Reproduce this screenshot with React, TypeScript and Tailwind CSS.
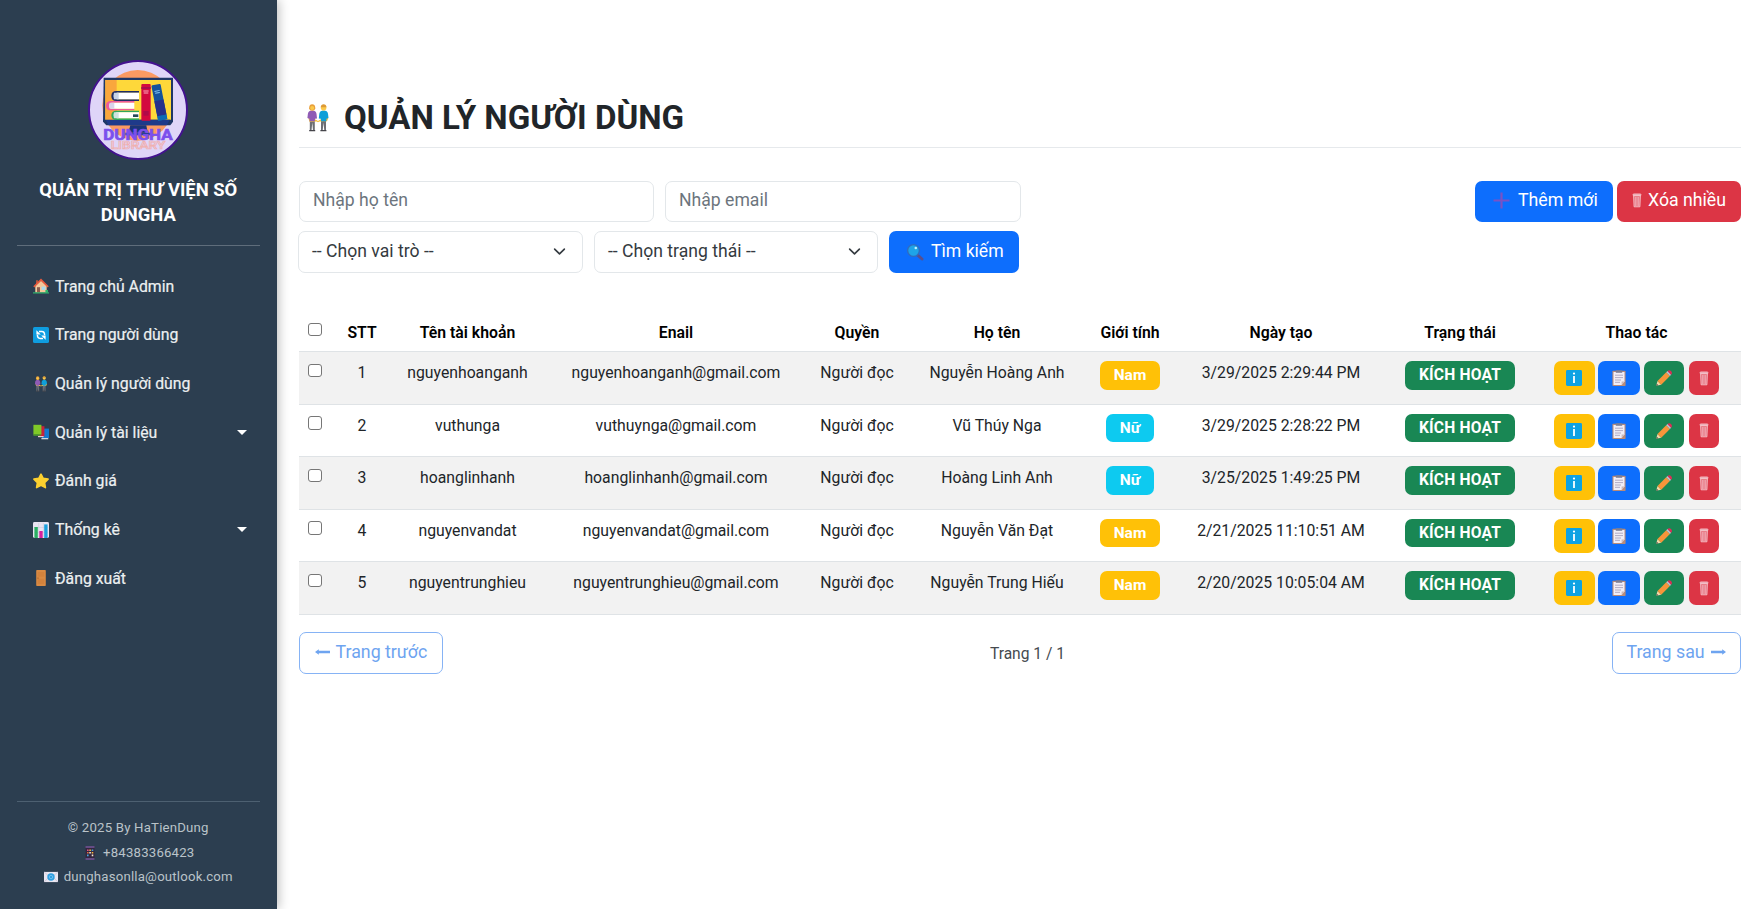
import type { ReactNode } from "react";
import clsx from "clsx";

type IconProps = { className?: string };

function Logo() {
  return (
    <svg viewBox="13 9 300 300" className="size-[100px] font-['Roboto',sans-serif]">
      <defs>
        <clipPath id="screen-disc">
          <circle cx="162" cy="145" r="106" />
        </clipPath>
      </defs>
      <circle cx="163" cy="159" r="147" fill="#dfd5f8" stroke="#43128f" strokeWidth="6" />
      <circle cx="162" cy="145" r="106" fill="#fb9a62" />
      <path d="M60 62h208v132l-8 11H68l-10-11z" fill="#1f3767" />
      <path d="M65 69h197v119H65z" fill="#fed83a" />
      <path d="M65 69h34v119H65z" fill="#f9a73d" />
      <path d="M60 188h208v6l-8 11H68l-10-11z" fill="#1f3a8a" clipPath="url(#screen-disc)" />
      <path d="M140 205h48l4 22h-58z" fill="#1b3478" />
      <path d="M125 227h76v8h-76z" fill="#2c3f94" />
      <path d="M166 102h-68q-15 0-15 15t15 15h68v-5h-64q-8 0-8-10t8-10h64z" fill="#1f2d63" />
      <path d="M166 107h-66q-7 0-7 10t7 10h66z" fill="#fff" />
      <path d="M91 107h14v20H91q-4-10 0-20z" fill="#c8d3e6" />
      <path d="M152 132H82q-15 0-15 14t15 14h70v-5H86q-9 0-9-9t9-9h66z" fill="#ec5a9b" />
      <path d="M152 137H84q-7 0-7 9t7 9h68z" fill="#fff" />
      <path d="M78 137h14v18H78q-4-9 0-18z" fill="#d9d3ea" />
      <path d="M166 161H98q-15 0-15 14t15 14h68v-5h-64q-8 0-8-9t8-9h64z" fill="#2fa85c" />
      <path d="M166 166h-66q-7 0-7 9t7 9h66z" fill="#fff" />
      <path d="M91 166h14v18H91q-4-9 0-18z" fill="#cfe3df" />
      <path d="M148 172h16v8h-16z" fill="#244a58" />
      <rect x="173" y="81" width="28" height="110" rx="3" fill="#d3093f" />
      <path d="M173 90h28v6h-28z" fill="#a90b4c" />
      <path d="M179 102h16M180 108h14" stroke="#ffb0bd" strokeWidth="3" />
      <path d="M179 162h16v14h-16z" fill="#b00a48" />
      <g transform="rotate(-11 227 136)">
        <rect x="213" y="82" width="28" height="108" rx="3" fill="#14529c" />
        <path d="M213 130h28v46h-28z" fill="#26308b" />
        <path d="M213 176h28v14h-28z" fill="#0c6bb4" />
        <path d="M219 101h16M220 107h14" stroke="#85c9f5" strokeWidth="3" />
      </g>
      <text textAnchor="middle">
        <tspan x="163" y="250" textLength="208" lengthAdjust="spacingAndGlyphs" fontWeight="700" fontSize="45" fill="#7c50ec" stroke="#7c50ec" strokeWidth="2">DUNGHA</tspan>
        <tspan x="163" y="276" textLength="164" lengthAdjust="spacingAndGlyphs" fontWeight="500" fontSize="32" fill="#e3cdf0" stroke="#f0b0ae" strokeWidth="2">LIBRARY</tspan>
      </text>
    </svg>
  );
}

function HouseIcon({ className }: IconProps) {
  return (
    <svg viewBox="0 0 16 16" className={className}>
      <path d="M3 2.2h2v4H3z" fill="#b5543c" />
      <path d="M2.3 8 8 2.6 13.7 8v6.4H2.3z" fill="#f5c89b" />
      <path d="M8 .6.3 8.2l1 1.2L8 3.1l6.7 6.3 1-1.2z" fill="#ea5a3d" />
      <path d="M4 9.2h3v5.2H4z" fill="#8d5a4a" />
      <path d="M8.6 8.6h3.6v3.3H8.6z" fill="#a5dcf2" />
      <path d="M0 14.3h16v1.2H0z" fill="#2fb56d" />
      <path d="M12.4 12h2.6v2.6h-2.6z" fill="#2fb56d" />
    </svg>
  );
}

function SyncIcon({ className }: IconProps) {
  return (
    <svg viewBox="0 0 16 16" className={className}>
      <rect width="16" height="16" rx="1.6" fill="#0f9de0" />
      <path d="M6 4.600h2.800q2.800 0 2.800 3.600M10 11.400H7.200q-2.800 0-2.800-3.600" fill="none" stroke="#fff" strokeWidth="1.500" />
      <path d="M3.400 3.200v4.400h4.400zM12.600 12.800V8.400H8.200z" fill="#fff" />
    </svg>
  );
}

function CoupleIcon({ className }: IconProps) {
  return (
    <svg viewBox="0 0 22 28" className={className}>
      <path d="M2.800 16h5v10.600H6l-.7-8-.8 8H2.800zM14 16h5v10.600h-1.700l-.8-8-.8 8H14z" fill="#6d6e73" />
      <path d="M2.200 26h6v1.300h-6zM13.400 26h6v1.300h-6z" fill="#45444a" />
      <path d="M1 12.500 9 15.800l2 1.200 2-1.200 7.800-3.300.4 2-1.200 2.800h-1L12.400 17.500 11 18.300l-1.400-.8-6 .2H2.400z" fill="#f4bf3e" />
      <path d="M5.200 6.600q3.700 0 4.300 3.200l.5 4.600-2 .4-.2 2.400H2.700l-.3-2.400-2-.8.5-4.200q.6-3.200 4.300-3.200z" fill="#8f5bb5" />
      <path d="M16.700 6.600q3.700 0 4.300 3.200l.5 4.200-2 .8-.2 2.400h-5.200l-.3-2.400-2-.4.5-4.600q.6-3.200 4.400-3.200z" fill="#0f9fd8" />
      <path d="M5.200.3q3.200 0 3.100 4.300-.3 2.200-3.100 2.200T2.100 4.600Q2 .3 5.200.3z" fill="#e9a03b" />
      <circle cx="5.200" cy="4" r="2" fill="#fbc94b" />
      <circle cx="16.600" cy="3.700" r="2.800" fill="#fbc94b" />
      <path d="M13.700 3.200Q14 .3 16.600.3t2.900 2.900z" fill="#dd9a35" />
    </svg>
  );
}

function BooksIcon({ className }: IconProps) {
  return (
    <svg viewBox="0 0 16 16" className={className}>
      <path d="M9 4.600h7v9.600H9z" fill="#1478cf" />
      <path d="M8.400 14h6.800v1.300H8.400z" fill="#cfd9e3" />
      <path d="M5.600 2.200h5.800v10.200H5.600z" fill="#c8223b" />
      <path d="M5 12h5.600v1.200H5z" fill="#e9ccd2" />
      <path d="M.4.800h8v9.800h-8z" fill="#80c928" />
      <path d="M.4 10.200h7.200v1.600H.4z" fill="#4d9a2b" />
    </svg>
  );
}

function StarIcon({ className }: IconProps) {
  return (
    <svg viewBox="0 0 16 16" className={className}>
      <path d="m8 1.100 2.200 4.300 4.900.7-3.500 3.500.8 5L8 12.400l-4.400 2.200.8-5L.9 6.100l4.900-.7z" fill="#fcd02f" stroke="#fcd02f" strokeWidth="1.600" strokeLinejoin="round" />
    </svg>
  );
}

function ChartIcon({ className }: IconProps) {
  return (
    <svg viewBox="0 0 16 16" className={className}>
      <rect width="16" height="16" rx="1.400" fill="#e9e4f2" />
      <path d="M5.700 1v14M10.400 1v14M1 5.500h14M1 10.500h14" stroke="#c9c4d6" strokeWidth=".5" />
      <path d="M1.400 5h3.400v11H1.400z" fill="#2aae62" />
      <path d="M6.300 9h3.400v7H6.300z" fill="#d6219c" />
      <path d="M11.200 2.400h3.400V16h-3.400z" fill="#1ba0de" />
    </svg>
  );
}

function DoorIcon({ className }: IconProps) {
  return (
    <svg viewBox="0 0 16 16" className={className}>
      <rect x="3.200" width="9.600" height="16" rx=".8" fill="#d98a43" />
      <path d="M4.800 2h6.400v4.800H4.800zM4.800 8.800h6.400V14H4.800z" fill="#d3823c" />
      <circle cx="5" cy="8" r=".6" fill="#8a4b1d" />
    </svg>
  );
}

function PhoneIcon({ className }: IconProps) {
  return (
    <svg viewBox="0 0 10 14" className={className}>
      <path d="M.5.200h9v13.600h-9z" fill="#33263f" />
      <path d="M.5.200h9v1.500h-9zM.5 12.300h9v1.500h-9z" fill="#76599c" />
      <path d="M2 3.400h1.600V5H2z" fill="#e2508a" />
      <path d="M4.300 3.400h1.600V5H4.300zM6.700 6h1.600v1.600H6.700z" fill="#f5b63c" />
      <path d="M6.700 3.400h1.600V5H6.700zM2 8.600h1.600v1.600H2z" fill="#45a8dc" />
      <path d="M4.300 6h1.600v1.600H4.300zM6.700 8.600h1.600v1.600H6.700z" fill="#f3e9d4" />
      <path d="M2 6h1.600v1.600H2z" fill="#d8683e" />
    </svg>
  );
}

function MailIcon({ className }: IconProps) {
  return (
    <svg viewBox="0 0 14 14" className={className}>
      <path d="M0 1.900h14v10.200H0z" fill="#e9e6f1" />
      <path d="M0 1.900 7 8l7-6.100M0 12.100l5-5M14 12.100l-5-5" fill="none" stroke="#c5bfd3" strokeWidth=".7" />
      <circle cx="7" cy="7" r="3.700" fill="#2f9fe0" />
      <circle cx="7" cy="7" r="1.700" fill="none" stroke="#7cc4f0" strokeWidth=".8" />
    </svg>
  );
}

function SearchIcon({ className }: IconProps) {
  return (
    <svg viewBox="0 0 18 18" className={className}>
      <path d="m11.500 12 4.500 4" stroke="#5a4f8c" strokeWidth="3" strokeLinecap="round" />
      <circle cx="7.500" cy="7.500" r="5.900" fill="#1ea4e8" stroke="#2f6cc0" strokeWidth="1.400" />
      <circle cx="9.800" cy="5" r="1.300" fill="#bdf0ff" />
    </svg>
  );
}

function TrashIcon({ className }: IconProps) {
  return (
    <svg viewBox="0 0 10 15" className={className}>
      <path d="M1.600 2.500 2.100 13.800h5.800l.5-11.300z" fill="#f3b9c2" fillOpacity=".45" stroke="#f6c3ca" strokeWidth=".9" />
      <path d="M3.600 4v9M5 4v9M6.400 4v9" stroke="#f3c6cc" strokeWidth=".6" />
      <rect x="1" y=".9" width="8" height="1.800" rx=".8" fill="#e9a3ae" stroke="#f8d2d7" strokeWidth=".7" />
    </svg>
  );
}

function InfoIcon() {
  return (
    <svg viewBox="0 0 16 16" className="size-[16px]">
      <rect width="16" height="16" rx="1.400" fill="#0ea2e3" />
      <circle cx="8" cy="3.600" r="1.100" fill="#fff" />
      <path d="M7.100 5.900h1.800v7.200H7.100z" fill="#fff" />
    </svg>
  );
}

function ClipboardIcon() {
  return (
    <svg viewBox="0 0 16 16" className="size-[16px]">
      <rect x="1.400" y=".8" width="13.200" height="15.200" rx=".8" fill="#b98b78" />
      <path d="M2.500 2h11v9.600L10.600 15H2.500z" fill="#f1eef7" />
      <path d="M13.500 11.600h-2.900V15z" fill="#c9b8b8" />
      <path d="M4.800.2h6.400v2.600H4.800z" fill="#7d7f95" />
      <path d="M4 5.200h8M4 7.600h8M4 10h6M4 12.300h5" stroke="#a9a3bd" strokeWidth=".9" />
    </svg>
  );
}

function PencilIcon() {
  return (
    <svg viewBox="0 0 16 16" className="size-[16px]">
      <path d="M.2 15.800 1.500 11l3.700 3.700z" fill="#f6d9a8" />
      <path d="M.2 15.800.8 13.700l1.500 1.500z" fill="#4a4a4a" />
      <path d="M1.500 11 10.200 2.200l3.700 3.700-8.700 8.800z" fill="#f7953a" />
      <path d="m10.200 2.200 1.300-1.200 3.600 3.700-1.200 1.200z" fill="#c8bfd0" />
      <path d="M11.500 1q1.800-1.600 3.500.1 1.800 1.800.1 3.600z" fill="#e02b57" />
    </svg>
  );
}

const NAV: { label: string; icon: (p: IconProps) => ReactNode; caret?: boolean }[] = [
  { label: "Trang chủ Admin", icon: HouseIcon },
  { label: "Trang người dùng", icon: SyncIcon },
  { label: "Quản lý người dùng", icon: CoupleIcon },
  { label: "Quản lý tài liệu", icon: BooksIcon, caret: true },
  { label: "Đánh giá", icon: StarIcon },
  { label: "Thống kê", icon: ChartIcon, caret: true },
  { label: "Đăng xuất", icon: DoorIcon },
];

const USERS = [
  ["nguyenhoanganh", "nguyenhoanganh@gmail.com", "Nguyễn Hoàng Anh", "Nam", "3/29/2025 2:29:44 PM"],
  ["vuthunga", "vuthuynga@gmail.com", "Vũ Thúy Nga", "Nữ", "3/29/2025 2:28:22 PM"],
  ["hoanglinhanh", "hoanglinhanh@gmail.com", "Hoàng Linh Anh", "Nữ", "3/25/2025 1:49:25 PM"],
  ["nguyenvandat", "nguyenvandat@gmail.com", "Nguyễn Văn Đạt", "Nam", "2/21/2025 11:10:51 AM"],
  ["nguyentrunghieu", "nguyentrunghieu@gmail.com", "Nguyễn Trung Hiếu", "Nam", "2/20/2025 10:05:04 AM"],
];

const GRID = "grid grid-cols-[36px_54px_157px_260px_102px_178px_88px_214px_144px_209px] text-center";

function Sidebar() {
  return (
    <aside className="flex w-[276.500px] shrink-0 flex-col bg-[#2c3e50] px-[16.500px] pt-[60px] shadow-[2px_0_10px_rgba(0,0,0,0.25)]">
      <div className="flex h-[185.500px] flex-col items-center border-b border-[#5f6d7b]">
        <Logo />
        <h1 className="mt-[16.500px] text-center text-[18.400px] leading-[25px] font-bold text-white">
          QUẢN TRỊ THƯ VIỆN SỐ
          <br />
          DUNGHA
        </h1>
      </div>
      <nav className="mt-[16.500px] flex flex-col">
        {NAV.map(({ label, icon: Icon, caret }) => (
          <a key={label} className="flex h-[48.700px] items-center pr-[13px] pl-[16px] text-[15.800px] text-[#ecf0f1]">
            <Icon className="size-[16px] shrink-0" />
            <span className="ml-[6.500px] [-webkit-text-stroke:0.200px_#ecf0f1]">{label}</span>
            {caret && (
              <svg viewBox="0 0 10 5" className="ml-auto h-[5px] w-[10px]">
                <path d="M0 0h10L5 5z" fill="#fff" />
              </svg>
            )}
          </a>
        ))}
      </nav>
      <footer className="mt-auto mb-[19.500px] flex flex-col items-center border-t border-[#4d6071] pt-[14px] text-[13.200px] leading-[24.500px] tracking-[0.200px] text-[#bac3c9]">
        <p>© 2025 By HaTienDung</p>
        <p className="flex items-center pl-[3px]">
          <PhoneIcon className="mr-[8px] h-[14px] w-[10px]" />
          <span>+84383366423</span>
        </p>
        <p className="flex items-center">
          <MailIcon className="mr-[6px] size-[14px]" />
          <span>dunghasonlla@outlook.com</span>
        </p>
      </footer>
    </aside>
  );
}

function Select({ children, className }: { children: ReactNode; className: string }) {
  return (
    <div className={clsx("flex h-[42px] items-center justify-between rounded-[7px] border border-[#e3e7ea] pr-[16px] pl-[13px] text-[#343a40]", className)}>
      <span>{children}</span>
      <svg viewBox="0 0 16 16" className="size-[13px]" fill="none" stroke="#343a40" strokeWidth="2" strokeLinecap="round" strokeLinejoin="round">
        <path d="m2 5 6 6 6-6" />
      </svg>
    </div>
  );
}

function ActionButton({ children, className }: { children: ReactNode; className: string }) {
  return <button className={clsx("flex h-[34px] items-center justify-center rounded-[7px]", className)}>{children}</button>;
}

function Check({ className }: { className?: string }) {
  return <span className={clsx("ml-[9px] block size-[13.500px] rounded-[3px] border border-[#767676] bg-white", className)} />;
}

export default function App() {
  return (
    <div className="flex h-[909px] w-[1761px] overflow-hidden bg-white font-['Roboto',sans-serif] text-[#212529]">
      <Sidebar />
      <main className="ml-[22.500px] w-[1442px] pt-[94px]">
        <header className="flex h-[53.500px] items-start border-b border-[#e6e9ec]">
          <CoupleIcon className="mt-[10px] ml-[7.500px] h-[28px] w-[22px]" />
          <h2 className="ml-[15.500px] text-[33.100px] leading-[48px] font-bold">QUẢN LÝ NGƯỜI DÙNG</h2>
        </header>

        <section className="mt-[33px] flex items-start justify-between text-[17.600px]">
          <div>
            <div className="flex gap-[11px]">
              <div className="flex h-[41px] w-[355px] items-center rounded-[7px] border border-[#e3e7ea] px-[13px] pb-px text-[#6c757d]">Nhập họ tên</div>
              <div className="flex h-[41px] w-[356px] items-center rounded-[7px] border border-[#e3e7ea] px-[13px] pb-px text-[#6c757d]">Nhập email</div>
            </div>
            <div className="mt-[9px] -ml-px flex gap-[11px]">
              <Select className="w-[285px]">-- Chọn vai trò --</Select>
              <Select className="w-[284px]">-- Chọn trạng thái --</Select>
              <button className="flex h-[42px] w-[130px] items-center rounded-[7px] bg-[#0d6efd] pl-[17px] text-white">
                <SearchIcon className="mr-[7px] size-[18px]" />
                Tìm kiếm
              </button>
            </div>
          </div>
          <div className="flex gap-[4px]">
            <button className="flex h-[41px] w-[138px] items-center rounded-[7px] bg-[#0d6efd] pb-px pl-[18px] text-[17.750px] text-white">
              <svg viewBox="0 0 17 17" className="mr-[8px] size-[17px]">
                <path d="M8.500.5v16M.5 8.500h16" stroke="#7a52c4" strokeWidth="2.200" />
              </svg>
              Thêm mới
            </button>
            <button className="flex h-[41px] w-[124px] items-center rounded-[7px] bg-[#dc3545] pb-px pl-[15px] text-[17.700px] text-white">
              <TrashIcon className="mr-[6px] h-[15px] w-[10px]" />
              Xóa nhiều
            </button>
          </div>
        </section>

        <section className="mt-[37.500px]">
          <div className={clsx(GRID, "h-[42px] border-b border-[#dfe3e6] text-[15.800px] leading-[45px] font-semibold text-black")}>
            <Check className="mt-[12.500px]" />
            <span>STT</span>
            <span>Tên tài khoản</span>
            <span>Enail</span>
            <span>Quyền</span>
            <span>Họ tên</span>
            <span>Giới tính</span>
            <span>Ngày tạo</span>
            <span>Trạng thái</span>
            <span>Thao tác</span>
          </div>
          {USERS.map(([account, email, name, gender, created], i) => (
            <div key={account} className={clsx(GRID, "h-[52.600px] border-b border-[#dfe3e6] text-[15.780px] leading-[42px]", i % 2 === 0 && "bg-[#f2f2f2]")}>
              <Check className="mt-[11.500px]" />
              <span>{i + 1}</span>
              <span>{account}</span>
              <span>{email}</span>
              <span>Người đọc</span>
              <span>{name}</span>
              <span className={clsx("mt-[9px] h-[28.500px] justify-self-center rounded-[7px] px-[13.500px] text-[15.500px] leading-[28px] font-bold text-white", gender === "Nam" ? "bg-[#ffc107]" : "bg-[#0dcaf0]")}>{gender}</span>
              <span>{created}</span>
              <span className="mt-[9px] h-[28.500px] w-[110px] justify-self-center rounded-[7px] bg-[#198754] text-[15.600px] leading-[28px] font-bold tracking-[0.200px] text-white">KÍCH HOẠT</span>
              <div className="mt-[9px] flex items-start justify-center">
                <ActionButton className="w-[41px] bg-[#ffc107]"><InfoIcon /></ActionButton>
                <ActionButton className="ml-[3.500px] w-[41.500px] bg-[#0d6efd]"><ClipboardIcon /></ActionButton>
                <ActionButton className="ml-[4px] w-[40.500px] bg-[#198754]"><PencilIcon /></ActionButton>
                <ActionButton className="ml-[4.500px] w-[30.500px] bg-[#dc3545]"><TrashIcon className="h-[15px] w-[10px]" /></ActionButton>
              </div>
            </div>
          ))}
        </section>

        <nav className="mt-[17px] flex h-[42px] items-center justify-between text-[17.800px] text-[#6ea4f0]">
          <button className="flex h-[42px] w-[144px] items-center rounded-[7px] border border-[#86b3f5] pb-px pl-[14.500px]">
            <svg viewBox="0 0 15 8" className="mr-[6px] h-[8px] w-[15px]" fill="#6ea4f0">
              <path d="M0 4 3.800 1.200v1.600H15v2.400H3.800v1.600z" />
            </svg>
            Trang trước
          </button>
          <span className="pt-[3px] text-[15.600px] text-[#454a4f]">Trang 1 / 1</span>
          <button className="flex h-[42px] w-[129px] items-center rounded-[7px] border border-[#86b3f5] pb-px pl-[13.500px]">
            Trang sau
            <svg viewBox="0 0 15 8" className="ml-[6px] h-[8px] w-[15px]" fill="#6ea4f0">
              <path d="M15 4 11.200 1.200v1.600H0v2.400h11.200v1.600z" />
            </svg>
          </button>
        </nav>
      </main>
    </div>
  );
}
